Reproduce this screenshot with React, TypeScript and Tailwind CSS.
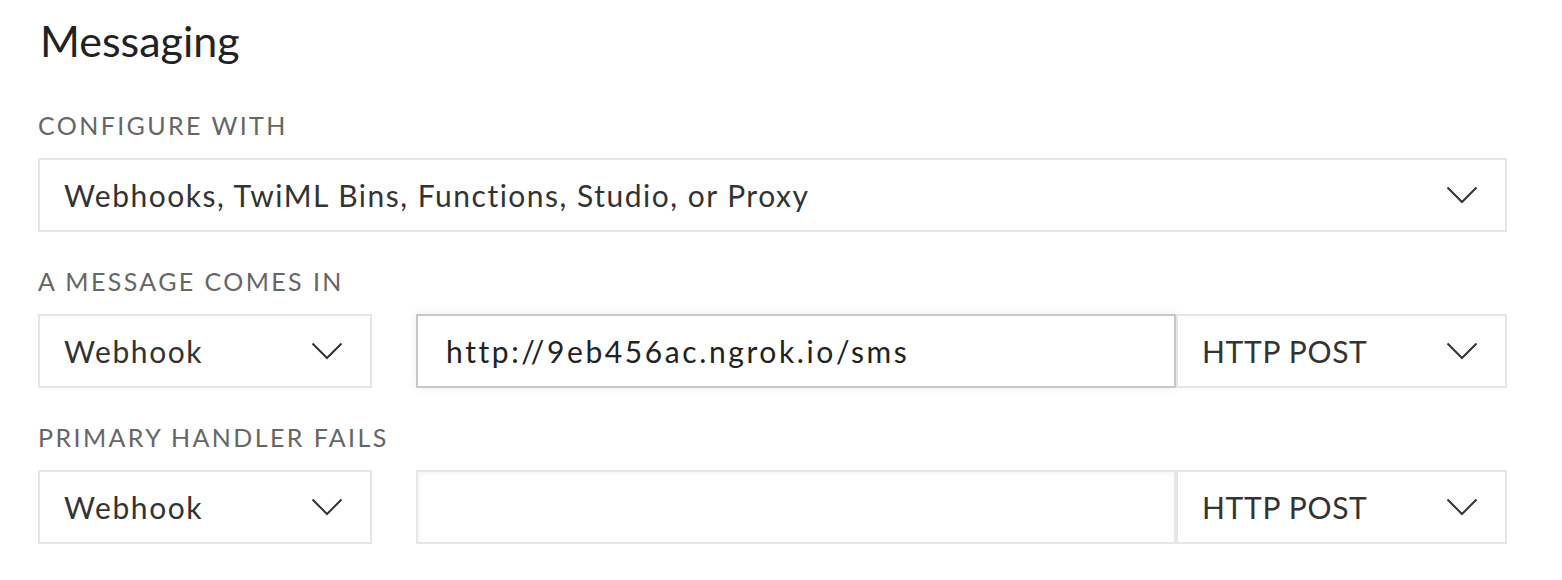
function Chevron() {
  return (
    <svg width="32" height="18" viewBox="0 0 32 18" fill="none" className="shrink-0">
      <path d="M1.5 1.5 L16 16 L30.5 1.5" stroke="#333" strokeWidth="2" />
    </svg>
  )
}

function Select({ value, className = '', track = '' }: { value: string; className?: string; track?: string }) {
  return (
    <div
      className={`flex h-[74px] items-center justify-between border-2 border-[#e6e6e6] bg-white pl-[24px] pr-[27px] text-[30px] text-[#333] ${className}`}
    >
      <span className={track}>{value}</span>
      <Chevron />
    </div>
  )
}

function Label({ children }: { children: string }) {
  return (
    <div className="mb-[18px] text-[25px] leading-[30px] tracking-[2.4px] text-[#666]">{children}</div>
  )
}

export default function App() {
  return (
    <div
      className="min-h-[580px] bg-white pl-[38px] pt-[13px]"
      style={{ fontFamily: 'Lato, "Open Sans", sans-serif' }}
    >
      <div className="w-[1469px]">
        <h1 className="mb-[41px] pl-[2px] text-[43px] leading-[56px] text-[#222]">Messaging</h1>

        <Label>CONFIGURE WITH</Label>
        <Select value="Webhooks, TwiML Bins, Functions, Studio, or Proxy" track="tracking-[1.5px]" />

        <div className="mt-[34px]">
          <Label>A MESSAGE COMES IN</Label>
          <div className="flex">
            <Select value="Webhook" className="w-[334px]" track="tracking-[1.6px]" />
            <div className="ml-[44px] flex h-[74px] w-[760px] items-center border-2 border-[#c8c8c8] bg-white pl-[28px] text-[30px] tracking-[2.6px] text-[#222] shadow-[0_0_10px_rgba(0,0,0,0.08)]">
              http://9eb456ac.ngrok.io/sms
            </div>
            <Select value="HTTP POST" className="w-[331px]" track="tracking-[0.7px]" />
          </div>
        </div>

        <div className="mt-[34px]">
          <Label>PRIMARY HANDLER FAILS</Label>
          <div className="flex">
            <Select value="Webhook" className="w-[334px]" track="tracking-[1.6px]" />
            <div className="ml-[44px] h-[74px] w-[760px] border-2 border-[#e6e6e6] bg-white shadow-[inset_2px_2px_4px_rgba(0,0,0,0.04)]" />
            <Select value="HTTP POST" className="w-[331px]" track="tracking-[0.7px]" />
          </div>
        </div>
      </div>
    </div>
  )
}
